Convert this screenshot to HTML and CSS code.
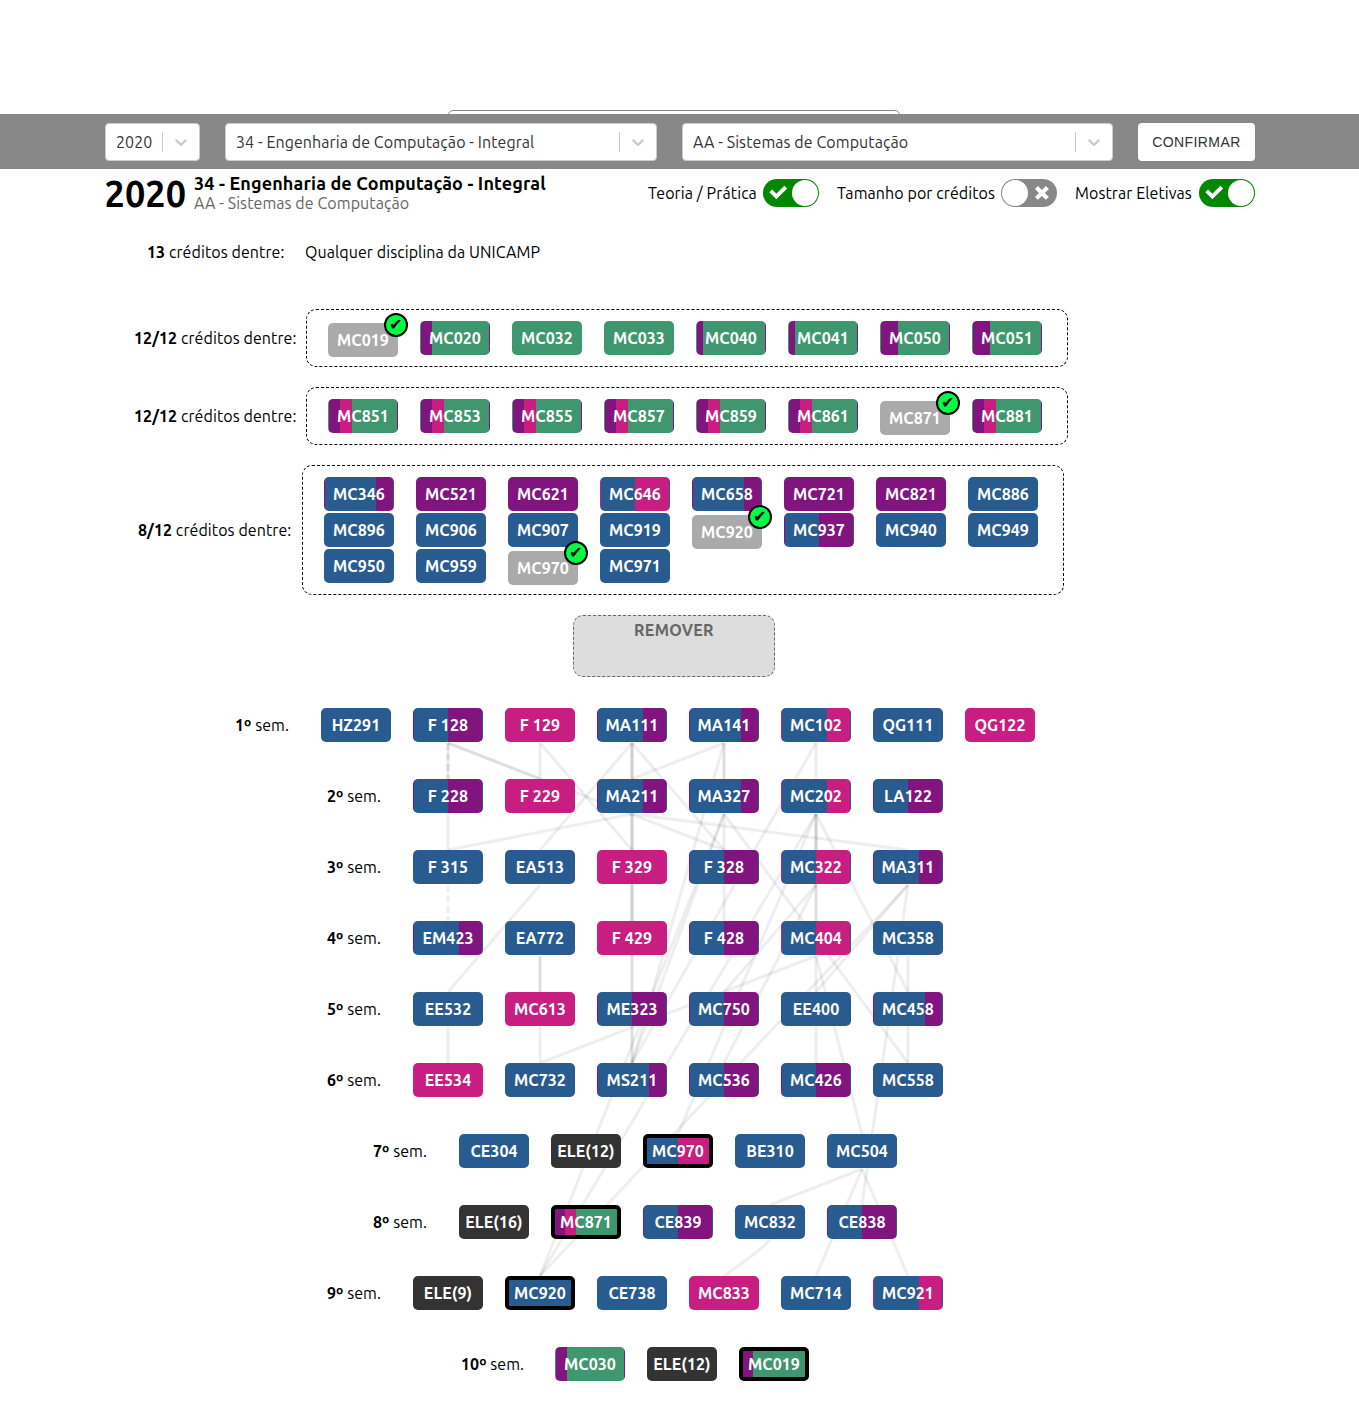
FILE: index.html
```
<!DOCTYPE html>
<html lang="pt-BR">
<head>
<meta charset="utf-8">
<title>2020 - Engenharia de Computação</title>
<link rel="stylesheet" href="styles.css">
</head>
<body>
<svg class="defs" width="0" height="0" aria-hidden="true">
  <symbol id="chevron" viewBox="0 0 20 20"><path d="M4.516 7.548c0.436-0.446 1.043-0.481 1.576 0l3.908 3.747 3.908-3.747c0.533-0.481 1.141-0.446 1.574 0 0.436 0.445 0.408 1.197 0 1.615-0.406 0.418-4.695 4.502-4.695 4.502-0.217 0.223-0.502 0.335-0.787 0.335s-0.57-0.112-0.789-0.335c0 0-4.287-4.084-4.695-4.502s-0.436-1.17 0-1.615z"/></symbol>
  <symbol id="on" viewBox="-2 -5 17 21"><path d="M11.264 0L5.26 6.004 2.103 2.847 0 4.95l5.26 5.26 8.108-8.107L11.264 0"/></symbol>
  <symbol id="off" viewBox="-2 -5 14 20"><path d="M9.9 2.12L7.78 0 4.95 2.828 2.12 0 0 2.12l2.83 2.83L0 7.776 2.123 9.9 4.95 7.07 7.78 9.9 9.9 7.776 7.072 4.95 9.9 2.12"/></symbol>
</svg>

<div class="top"><div class="panel"></div></div>
<form class="bar">
  <div class="select year"><span>2020</span><i></i><svg><use href="#chevron"/></svg></div>
  <div class="select course"><span>34 - Engenharia de Computação - Integral</span><i></i><svg><use href="#chevron"/></svg></div>
  <div class="select track"><span>AA - Sistemas de Computação</span><i></i><svg><use href="#chevron"/></svg></div>
  <button type="button" class="confirm">CONFIRMAR</button>
</form>

<header class="head">
  <div class="head-year">2020</div>
  <div class="head-names">
    <h1>34 - Engenharia de Computação - Integral</h1>
    <p>AA - Sistemas de Computação</p>
  </div>
  <div class="options">
    <div class="option w1"><span>Teoria / Prática</span><div class="switch on"><svg><use href="#on"/></svg><b></b></div></div>
    <div class="option w2"><span>Tamanho por créditos</span><div class="switch"><b></b><svg><use href="#off"/></svg></div></div>
    <div class="option w3"><span>Mostrar Eletivas</span><div class="switch on"><svg><use href="#on"/></svg><b></b></div></div>
  </div>
</header>

<main>
<div class="free"><span class="credits"><b>13</b> créditos dentre:</span><span class="any">Qualquer disciplina da UNICAMP</span></div>

<section class="electives">
  <div class="group">
    <span class="credits"><b>12/12</b> créditos dentre:</span>
    <div class="box">
      <div class="chip used">MC019<em>✔</em></div><div class="chip tj a17">MC020</div><div class="chip proj">MC032</div><div class="chip proj">MC033</div><div class="chip tj a8">MC040</div><div class="chip tj a8">MC041</div><div class="chip tj a25">MC050</div><div class="chip tj a25">MC051</div>
    </div>
  </div>
  <div class="group">
    <span class="credits"><b>12/12</b> créditos dentre:</span>
    <div class="box">
      <div class="chip mix">MC851</div><div class="chip mix">MC853</div><div class="chip mix">MC855</div><div class="chip mix">MC857</div><div class="chip mix">MC859</div><div class="chip mix">MC861</div><div class="chip used">MC871<em>✔</em></div><div class="chip mix">MC881</div>
    </div>
  </div>
  <div class="group">
    <span class="credits"><b>8/12</b> créditos dentre:</span>
    <div class="box">
      <div class="chip tp a75">MC346</div><div class="chip prac">MC521</div><div class="chip prac">MC621</div><div class="chip tl a50">MC646</div><div class="chip tp a75">MC658</div><div class="chip prac">MC721</div><div class="chip prac">MC821</div><div class="chip">MC886</div>
      <div class="chip">MC896</div><div class="chip">MC906</div><div class="chip">MC907</div><div class="chip">MC919</div><div class="chip used">MC920<em>✔</em></div><div class="chip tp a50">MC937</div><div class="chip">MC940</div><div class="chip">MC949</div>
      <div class="chip">MC950</div><div class="chip">MC959</div><div class="chip used">MC970<em>✔</em></div><div class="chip">MC971</div>
    </div>
  </div>
</section>

<div class="remove">REMOVER</div>

<section class="semesters">
  <svg class="links" width="1270" height="673" viewBox="0 708 1270 673">
    <path d="M448 743V850"/><path class="dash double" d="M448 743V779"/><path class="dash" d="M448 885V921"/>
    <path d="M448 743L540 779"/><path d="M448 743L724 850"/>
    <path d="M540 743V779"/><path d="M540 743L632 850"/>
    <path d="M632 743V779"/><path d="M632 743V850"/><path d="M632 743V921"/><path d="M632 814V1063"/><path d="M632 885V1063"/>
    <path d="M632 743L540 850"/><path d="M632 743L724 850"/>
    <path d="M724 743L632 779"/><path d="M724 743V779"/><path d="M724 743V921"/><path d="M724 743L632 1063"/>
    <path d="M632 814L448 850"/><path d="M632 814L908 850"/>
    <path d="M724 814L632 1063"/><path d="M724 814L540 1276"/><path d="M724 814L908 1063"/>
    <path d="M816 743V779"/><path d="M816 743L632 1063"/>
    <path d="M816 814V850"/><path d="M816 814V921"/><path d="M816 814V921"/>
    <path d="M816 814L908 992"/><path d="M816 814L678 1134"/><path d="M816 814L540 1276"/>
    <path d="M540 885L448 992"/><path d="M816 885L724 992"/><path d="M816 885L724 1063"/>
    <path d="M908 885L816 992"/><path d="M908 885L540 1276"/><path d="M908 885L862 1205"/>
    <path d="M540 956V992"/><path d="M540 956V1063"/>
    <path d="M816 956V1063"/><path d="M816 956L540 1063"/><path d="M816 956L862 1134"/>
    <path d="M908 956V1063"/><path d="M448 1027V1063"/>
    <path d="M862 1169L770 1205"/><path d="M862 1169L816 1276"/><path d="M862 1169L908 1276"/>
    <path d="M770 1240Q760 1251 724 1276"/>
  </svg>
  <div class="sem"><span><b>1º</b> sem.</span><div class="chip">HZ291</div><div class="chip tp a50">F 128</div><div class="chip lab">F 129</div><div class="chip tp a67">MA111</div><div class="chip tp a75">MA141</div><div class="chip tl a67">MC102</div><div class="chip">QG111</div><div class="chip lab">QG122</div></div>
  <div class="sem"><span><b>2º</b> sem.</span><div class="chip tp a50">F 228</div><div class="chip lab">F 229</div><div class="chip tp a67">MA211</div><div class="chip tp a75">MA327</div><div class="chip tl a67">MC202</div><div class="chip tp a50">LA122</div></div>
  <div class="sem"><span><b>3º</b> sem.</span><div class="chip">F 315</div><div class="chip">EA513</div><div class="chip lab">F 329</div><div class="chip tp a50">F 328</div><div class="chip tl a50">MC322</div><div class="chip tp a67">MA311</div></div>
  <div class="sem"><span><b>4º</b> sem.</span><div class="chip tp a67">EM423</div><div class="chip">EA772</div><div class="chip lab">F 429</div><div class="chip tp a50">F 428</div><div class="chip tl a50">MC404</div><div class="chip">MC358</div></div>
  <div class="sem"><span><b>5º</b> sem.</span><div class="chip">EE532</div><div class="chip lab">MC613</div><div class="chip tp a50">ME323</div><div class="chip tp a50">MC750</div><div class="chip">EE400</div><div class="chip tp a75">MC458</div></div>
  <div class="sem"><span><b>6º</b> sem.</span><div class="chip lab">EE534</div><div class="chip">MC732</div><div class="chip tp a75">MS211</div><div class="chip tp a50">MC536</div><div class="chip tp a50">MC426</div><div class="chip">MC558</div></div>
  <div class="sem"><span><b>7º</b> sem.</span><div class="chip">CE304</div><div class="chip ele">ELE(12)</div><div class="chip tl a50 pick">MC970</div><div class="chip">BE310</div><div class="chip">MC504</div></div>
  <div class="sem"><span><b>8º</b> sem.</span><div class="chip ele">ELE(16)</div><div class="chip mix pick">MC871</div><div class="chip tp a50">CE839</div><div class="chip">MC832</div><div class="chip tp a50">CE838</div></div>
  <div class="sem"><span><b>9º</b> sem.</span><div class="chip ele">ELE(9)</div><div class="chip pick">MC920</div><div class="chip">CE738</div><div class="chip lab">MC833</div><div class="chip">MC714</div><div class="chip tl a67">MC921</div></div>
  <div class="sem ten"><span><b>10º</b> sem.</span><div class="chip tj a17">MC030</div><div class="chip ele">ELE(12)</div><div class="chip tj a17 pick">MC019</div></div>
</section>
</main>
</body>
</html>
```
FILE: styles.css
```
* { box-sizing: border-box; }
body {
  margin: 0;
  height: 1407px;
  overflow: hidden;
  background: #fff;
  color: #000;
  font: 16px/20px Ubuntu, "Noto Sans", sans-serif;
  letter-spacing: .08px;
  --theory: #285c90;
  --practice: #81147f;
  --lab: #c81e81;
  --project: #3e976f;
}
.defs { display: block; }
.top { height: 114px; padding: 110px 0 0 448px; overflow: hidden; }
.panel { width: 452px; height: 40px; border: 1px solid #888; border-radius: 5px; }

.bar { display: flex; gap: 25px; height: 55px; padding: 9px 104px 8px 105px; background: #888; }
.select { display: flex; align-items: center; height: 38px; padding-left: 10px; border: 1px solid #ccc; border-radius: 4px; background: #fff; color: #333; white-space: nowrap; }
.select span { flex: 1; }
.select i { width: 1px; height: 20px; background: #ccc; }
.select svg { width: 20px; height: 20px; margin: 0 8px; fill: #ccc; }
.year { width: 95px; }
.course { width: 432px; }
.track { width: 431px; }
.confirm { width: 117px; height: 38px; padding: 0; border: 0; border-radius: 4px; background: #fff; color: #333; font: 14px "Liberation Sans", sans-serif; letter-spacing: .4px; }

.head { display: flex; height: 48px; padding: 4px 104px 0 105px; white-space: nowrap; }
.head-year { width: 89px; font-size: 36px; font-weight: bold; line-height: 42px; letter-spacing: .1px; text-indent: -.5px; }
.head-names { width: 453px; }
.head h1 { margin: 0; font-size: 18px; line-height: 20px; letter-spacing: .14px; }
.head p { margin: 0; color: #666; line-height: 20px; }
.options { display: flex; gap: 18px; padding-top: 6px; }
.option { display: flex; justify-content: space-between; align-items: center; height: 28px; }
.w1 { width: 171px; margin-left: 1px; letter-spacing: .1px; }
.w2 { width: 220px; }
.w3 { width: 180px; }
.switch { display: flex; align-items: center; width: 56px; height: 28px; padding: 0 1px; border-radius: 14px; background: #888; }
.switch.on { background: #080; padding-left: 0; }
.switch b { flex: none; width: 26px; height: 26px; border-radius: 50%; background: #fff; }
.switch svg { width: 30px; height: 28px; fill: #fff; }
.switch.on b { margin-left: -1px; }

.free { display: flex; gap: 21px; height: 70px; padding: 25px 0 0 147px; }
.credits { white-space: nowrap; }
.free .credits { width: 137px; }
.electives { display: flex; flex-direction: column; gap: 20px; width: 1202px; padding-top: 22px; }
.group { display: flex; justify-content: center; align-items: center; gap: 10px; }
.group .credits { width: 162px; }
.group:last-child .credits { width: 154px; }
.box { display: flex; flex-wrap: wrap; gap: 2px 22px; width: 762px; padding: 11px 21px; border: 1px dashed #000; border-radius: 10px; }

.chip { position: relative; display: flex; flex: none; justify-content: center; align-items: center; width: 70px; height: 34px; border: 1px solid transparent; border-radius: 5px; background-color: var(--theory); color: #fff; font-weight: bold; white-space: nowrap; }
.prac { background-color: var(--practice); }
.lab { background-color: var(--lab); }
.proj { background-color: var(--project); }
.ele { background-color: #333; }
.a8 { --at: 8.33%; }
.a17 { --at: 16.67%; }
.a25 { --at: 25%; }
.a50 { --at: 50%; }
.a67 { --at: 66.67%; }
.a75 { --at: 75%; }
.tp { background: linear-gradient(90deg, var(--theory) var(--at), var(--practice) var(--at)); }
.tl { background: linear-gradient(90deg, var(--theory) var(--at), var(--lab) var(--at)); }
.tj { background: linear-gradient(90deg, var(--practice) var(--at), var(--project) var(--at)); }
.mix { background: linear-gradient(90deg, var(--practice) 16.67%, var(--lab) 16.67% 33.33%, var(--project) 33.33%); }
.pick { border: 4px solid #000; }
.used { top: 2px; background-color: #aaa; }
.used em { position: absolute; top: -11px; right: -11px; width: 24px; height: 24px; border: 2px solid #000; border-radius: 50%; background: #0f4; color: #000; font: 16px/20px "DejaVu Sans", sans-serif; letter-spacing: 0; text-indent: -.5px; text-align: center; white-space: nowrap; }

.remove { width: 202px; height: 62px; margin: 20px 0 31px 573px; padding-top: 4px; border: 1px dashed #666; border-radius: 10px; background: #ddd; color: #666; font-weight: bold; letter-spacing: .3px; text-align: center; }

.semesters { position: relative; display: flex; flex-direction: column; gap: 37px; width: 1270px; }
.links { position: absolute; top: 0; left: 0; fill: none; stroke: rgba(0, 0, 0, .065); stroke-width: 3; }
.dash { stroke-dasharray: 7 3.5; }
.double { stroke: rgba(0, 0, 0, .1); }
.sem { display: flex; justify-content: center; align-items: center; gap: 22px; }
.sem > span { width: 54px; margin-right: 10px; white-space: nowrap; }
.ten > span { width: 62px; }
```
